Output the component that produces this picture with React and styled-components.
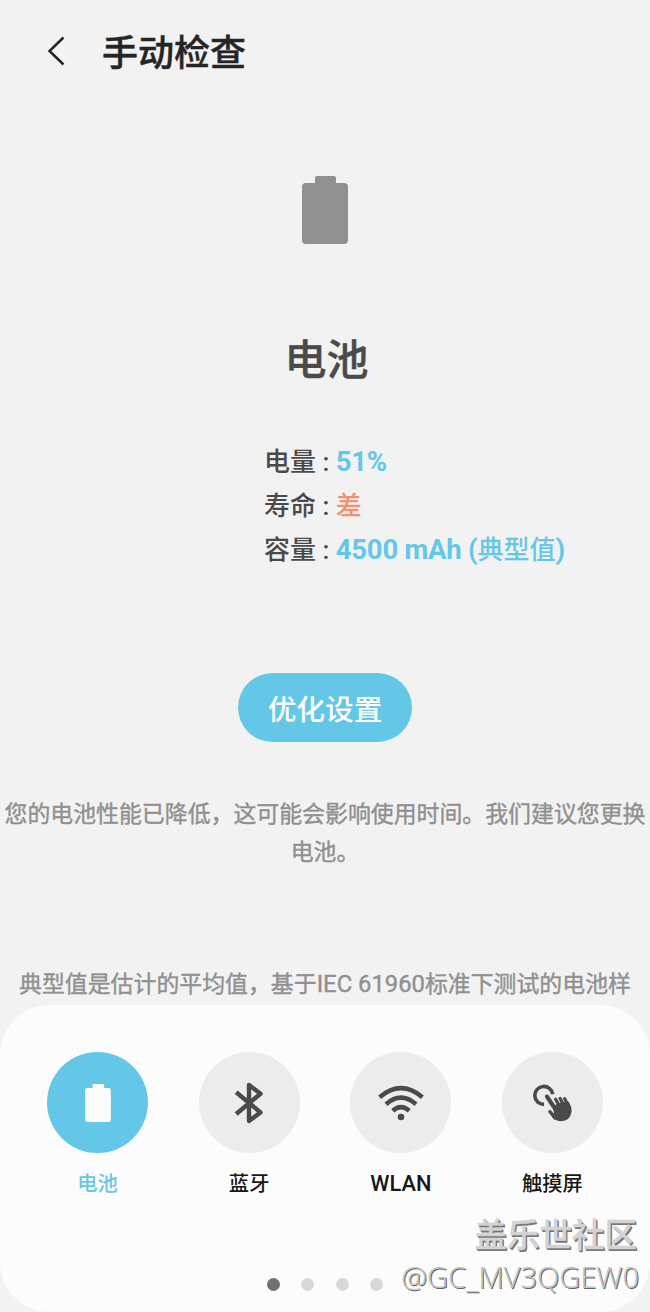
import styled, { createGlobalStyle } from 'styled-components';

const colors = {
  page: '#f2f2f2',
  sheet: '#fcfcfc',
  blue: '#65c7e8',
  poor: '#ee9274',
  title: '#252525',
  dark: '#4a4a4a',
  muted: '#909090',
  circle: '#ececec',
};

const infos = [
  { label: '电量', value: '51%', color: colors.blue },
  { label: '寿命', unit: '差', color: colors.poor },
  { label: '容量', value: '4500 mAh (', unit: '典型值', end: ')', color: colors.blue },
];

const BatteryIcon = ({ width, height, fill }) => (
  <svg width={width} height={height} viewBox="0 0 46 68" fill={fill}>
    <path d="M13 7V2q0-2 2-2h17q2 0 2 2v5h8q4 0 4 4v53q0 4-4 4H4q-4 0-4-4V11q0-4 4-4z" />
  </svg>
);

const BluetoothIcon = () => (
  <svg width="50" height="56" viewBox="0 0 50 56" fill="none" stroke={colors.dark} strokeWidth="4.4" strokeLinejoin="round">
    <path d="M12.2 17.2L36.5 37.5 25 46V10L36.5 18.7 12.2 39" />
  </svg>
);

const WifiIcon = () => (
  <svg width="50" height="56" viewBox="0 0 50 56" fill="none" stroke={colors.dark} strokeWidth="4.5">
    <path d="M3.6 22.2Q25 4.2 46.4 22.2M10 29.2Q25 16 40 29.2M16.7 35.7Q25 28.5 33.3 35.7" />
    <circle cx="25" cy="42" r="3.3" fill={colors.dark} stroke="none" />
  </svg>
);

const TouchIcon = () => (
  <svg width="56" height="56" viewBox="0 0 56 56" fill="none" stroke={colors.dark} strokeLinecap="round">
    <path d="M20 29.4A9 9 0 1 1 28.7 19.2" strokeWidth="3.6" strokeLinecap="butt" />
    <path d="M23 21.6L33 36.5" strokeWidth="4.2" />
    <path d="M31.6 24.2L35.5 31M36 23.3L40 31M40.6 23.7L44 30" strokeWidth="3.2" />
    <path d="M26 36.7L31 43" strokeWidth="3.4" />
    <path d="M29 33L33 28.5L44.5 26.5Q47.9 32 47.6 36.5Q46.3 45.8 37 46.2Q32 46 29 43L27.5 38L30 38Z" fill={colors.dark} stroke="none" />
  </svg>
);

const tests = [
  { label: '电池', icon: <BatteryIcon width={26} height={38} fill="#fcfcfc" />, active: true },
  { label: '蓝牙', icon: <BluetoothIcon /> },
  { label: 'WLAN', icon: <WifiIcon />, latin: true },
  { label: '触摸屏', icon: <TouchIcon /> },
];

const App = () => (
  <>
    <GlobalStyle />
    <Screen>
      <Header>
        <BackButton aria-label="返回">
          <svg width="18" height="30" viewBox="0 0 18 30" fill="none" stroke={colors.title} strokeWidth="2.5">
            <path d="M16.5 1.5L2.5 15l14 13.5" />
          </svg>
        </BackButton>
        <PageTitle>手动检查</PageTitle>
      </Header>
      <Content>
        <BatteryIcon width={46} height={68} fill={colors.muted} />
        <Title>电池</Title>
        <InfoList>
          {infos.map((info) => (
            <InfoRow key={info.label}>
              <InfoLabel>{info.label} : </InfoLabel>
              <Value $color={info.color}>
                {info.value}
                {info.unit && <Unit>{info.unit}</Unit>}
                {info.end}
              </Value>
            </InfoRow>
          ))}
        </InfoList>
        <OptimizeButton>优化设置</OptimizeButton>
        <Message>
          您的电池性能已降低，这可能会影响使用时间。我们建议您更换
          <br />
          电池。
        </Message>
        <Note>
          典型值是估计的平均值，基于<Latin>IEC 61960</Latin>标准下测试的电池样
        </Note>
      </Content>
      <Sheet>
        <TestList>
          {tests.map((test) => (
            <Test key={test.label}>
              <Circle $active={test.active}>{test.icon}</Circle>
              <TestLabel $active={test.active} $latin={test.latin}>
                {test.label}
              </TestLabel>
            </Test>
          ))}
        </TestList>
        <Dots>
          <Dot $active />
          <Dot />
          <Dot />
          <Dot />
        </Dots>
      </Sheet>
      <Watermark>
        <Community>盖乐世社区</Community>
        <UserName>@GC_MV3QGEW0</UserName>
      </Watermark>
    </Screen>
  </>
);

export default App;

const GlobalStyle = createGlobalStyle`
  * {
    box-sizing: border-box;
  }
  body {
    margin: 0;
    background-color: ${colors.page};
    font-family: Roboto, 'Noto Sans CJK SC', sans-serif;
  }
  svg {
    display: block;
    flex-shrink: 0;
  }
`;

const Screen = styled.div`
  position: relative;
  display: flex;
  flex-direction: column;
  width: 650px;
  height: 1312px;
  overflow: hidden;
`;

const Header = styled.header`
  display: flex;
  align-items: center;
  height: 102px;
  padding-left: 47px;
`;

const BackButton = styled.button`
  padding: 0;
  border: 0;
  background-color: transparent;
`;

const PageTitle = styled.h1`
  margin: 5px 0 0 37px;
  color: ${colors.title};
  font-size: 36px;
  font-weight: 500;
  line-height: 52px;
  -webkit-text-stroke: 0.4px ${colors.title};
`;

const Content = styled.main`
  display: flex;
  flex-direction: column;
  align-items: center;
  height: 903px;
  padding-top: 74px;
`;

const Title = styled.h2`
  margin: 87px 0 0 3px;
  color: ${colors.dark};
  font-size: 42px;
  font-weight: 500;
  line-height: 60px;
  -webkit-text-stroke: 0.4px ${colors.dark};
`;

const InfoList = styled.div`
  align-self: flex-start;
  margin: 48px 0 0 264px;
`;

const InfoRow = styled.div`
  display: flex;
  align-items: baseline;
  height: 44px;
  font-size: 26px;
  font-weight: 500;
  line-height: 46px;
  white-space: pre;
`;

const InfoLabel = styled.span`
  color: ${colors.dark};
`;

const Value = styled.span`
  color: ${({ $color }) => $color};
  font-size: 27.5px;
  font-weight: 700;
  letter-spacing: -0.25px;
  line-height: 44px;
`;

const Unit = styled.span`
  font-size: 26px;
  font-weight: 500;
  letter-spacing: 0;
`;

const OptimizeButton = styled.button`
  flex-shrink: 0;
  width: 174px;
  height: 69px;
  margin-top: 102px;
  padding: 0 0 1px;
  border: 0;
  border-radius: 35px;
  background-color: ${colors.blue};
  color: #fcfcfc;
  font-family: inherit;
  font-size: 28.7px;
  font-weight: 500;
`;

const Message = styled.p`
  margin: 54px 0 0;
  color: ${colors.muted};
  font-size: 22.9px;
  line-height: 38px;
  text-align: center;
  white-space: nowrap;
  -webkit-text-stroke: 0.4px ${colors.muted};
`;

const Note = styled(Message)`
  margin-top: 93px;
`;

const Latin = styled.span`
  font-size: 23.8px;
`;

const Sheet = styled.section`
  height: 307px;
  padding-top: 47px;
  border-radius: 50px;
  background-color: ${colors.sheet};
`;

const TestList = styled.div`
  display: flex;
  justify-content: space-between;
  padding: 0 47px;
`;

const Test = styled.div`
  display: flex;
  flex-direction: column;
  align-items: center;
  width: 101px;
`;

const Circle = styled.div`
  display: flex;
  align-items: center;
  justify-content: center;
  width: 101px;
  height: 101px;
  border-radius: 50%;
  background-color: ${({ $active }) => ($active ? colors.blue : colors.circle)};
`;

const TestLabel = styled.span`
  margin-top: 16px;
  color: ${({ $active }) => ($active ? colors.blue : '#171717')};
  font-size: ${({ $latin }) => ($latin ? '21.8px' : '20.3px')};
  font-weight: 500;
  line-height: 30px;
`;

const Dots = styled.div`
  display: flex;
  justify-content: center;
  gap: 21.3px;
  margin-top: 78.5px;
`;

const Dot = styled.span`
  width: 13px;
  height: 13px;
  border-radius: 50%;
  background-color: ${({ $active }) => ($active ? '#717171' : '#d8d8d8')};
`;

const Watermark = styled.div`
  position: absolute;
  right: 11px;
  bottom: 14px;
  display: flex;
  flex-direction: column;
  align-items: flex-end;
  white-space: nowrap;
`;

const Community = styled.span`
  margin: 0 2px -2px 0;
  color: #d3d3d3;
  font-size: 32.5px;
  font-weight: 500;
  line-height: 44px;
  -webkit-text-stroke: 0.4px #d3d3d3;
  text-shadow: 1px 1px 0 #777, 1.5px 1.5px 0 #777;
`;

const UserName = styled.span`
  color: #c4c4c4;
  font-family: 'Noto Sans', sans-serif;
  font-size: 29px;
  font-weight: 300;
  line-height: 42px;
  text-shadow: 1px 1px 0 #666;
`;
